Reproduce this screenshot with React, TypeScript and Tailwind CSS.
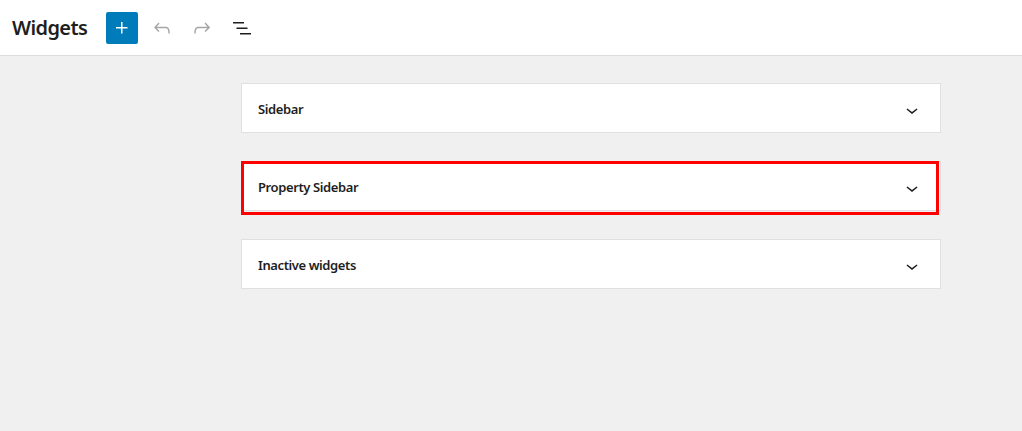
import React from 'react'

const FONT = { fontFamily: '"Noto Sans", "Open Sans", sans-serif' }

function ChevronDown() {
  return (
    <svg width="24" height="24" viewBox="0 0 24 24" className="fill-[#1e1e1e]">
      <path d="M17.5 11.6L12 16l-5.5-4.4.9-1.2L12 14l4.6-3.6 1 1.2z" />
    </svg>
  )
}

const AREAS = [
  { id: 'sidebar', title: 'Sidebar', highlighted: false },
  { id: 'property', title: 'Property Sidebar', highlighted: true },
  { id: 'inactive', title: 'Inactive widgets', highlighted: false },
]

export default function App() {
  return (
    <div className="flex h-[431px] w-[1022px] flex-col bg-[#f0f0f0]" style={FONT}>
      {/* Header */}
      <header className="flex h-[56px] shrink-0 items-center border-b border-[#dcdcde] bg-white pl-[12px]">
        <h1 className="text-[20px] font-semibold leading-none tracking-[-0.6px] text-[#1e1e1e]">Widgets</h1>
        <div className="ml-[19px] flex items-center gap-[8px]">
          <button className="flex size-[32px] items-center justify-center rounded-[2px] bg-[#007cba]">
            <svg width="24" height="24" viewBox="0 0 24 24" className="fill-white">
              <path d="M11 12.5V17.5H12.5V12.5H17.5V11H12.5V6H11V11H6V12.5H11Z" />
            </svg>
          </button>
          <button className="flex size-[32px] items-center justify-center">
            <svg width="24" height="24" viewBox="0 0 24 24" className="fill-[#a7a7a7]">
              <path d="M18.3 11.7c-.6-.6-1.4-.9-2.3-.9H6.7l2.9-3.3-1.1-1-4.5 5L8.5 16l1-1-2.7-2.7H16c.5 0 .9.2 1.3.5 1 1 1 3.4 1 4.5v.3h1.5v-.2c0-1.5 0-4.3-1.5-5.7z" />
            </svg>
          </button>
          <button className="flex size-[32px] items-center justify-center">
            <svg width="24" height="24" viewBox="0 0 24 24" className="fill-[#a7a7a7]">
              <path d="M15.6 6.5l-1.1 1 2.9 3.3H8c-.9 0-1.7.3-2.3.9-1.4 1.5-1.4 4.2-1.4 5.6v.2h1.5v-.3c0-1.1 0-3.5 1-4.5.3-.3.7-.5 1.3-.5h9.2L14.5 15l1.1 1.1 4.6-4.6-4.6-5z" />
            </svg>
          </button>
          <button className="flex size-[32px] items-center justify-center">
            <svg width="24" height="24" viewBox="0 0 24 24" className="fill-[#1e1e1e]">
              <path d="M3 6h11v1.5H3V6Zm3.5 5.5h11V13h-11v-1.5ZM21 17H10v1.5h11V17Z" />
            </svg>
          </button>
        </div>
      </header>

      {/* Widget areas */}
      <main className="flex flex-col gap-[28px] pl-[241px] pt-[27px]">
        {AREAS.map((area) => (
          <div
            key={area.id}
            className="relative flex h-[50px] w-[700px] items-center justify-between border border-[#e0e0e0] bg-white pl-[16px] pr-[16px] pt-[3px]"
          >
            <span className="text-[13px] font-semibold tracking-[-0.4px] text-[#1e1e1e]">{area.title}</span>
            <ChevronDown />
            {area.highlighted && (
              <div className="pointer-events-none absolute left-[-1px] top-[-1px] h-[54px] w-[698px] border-[3px] border-[#ff0000]" />
            )}
          </div>
        ))}
      </main>
    </div>
  )
}
